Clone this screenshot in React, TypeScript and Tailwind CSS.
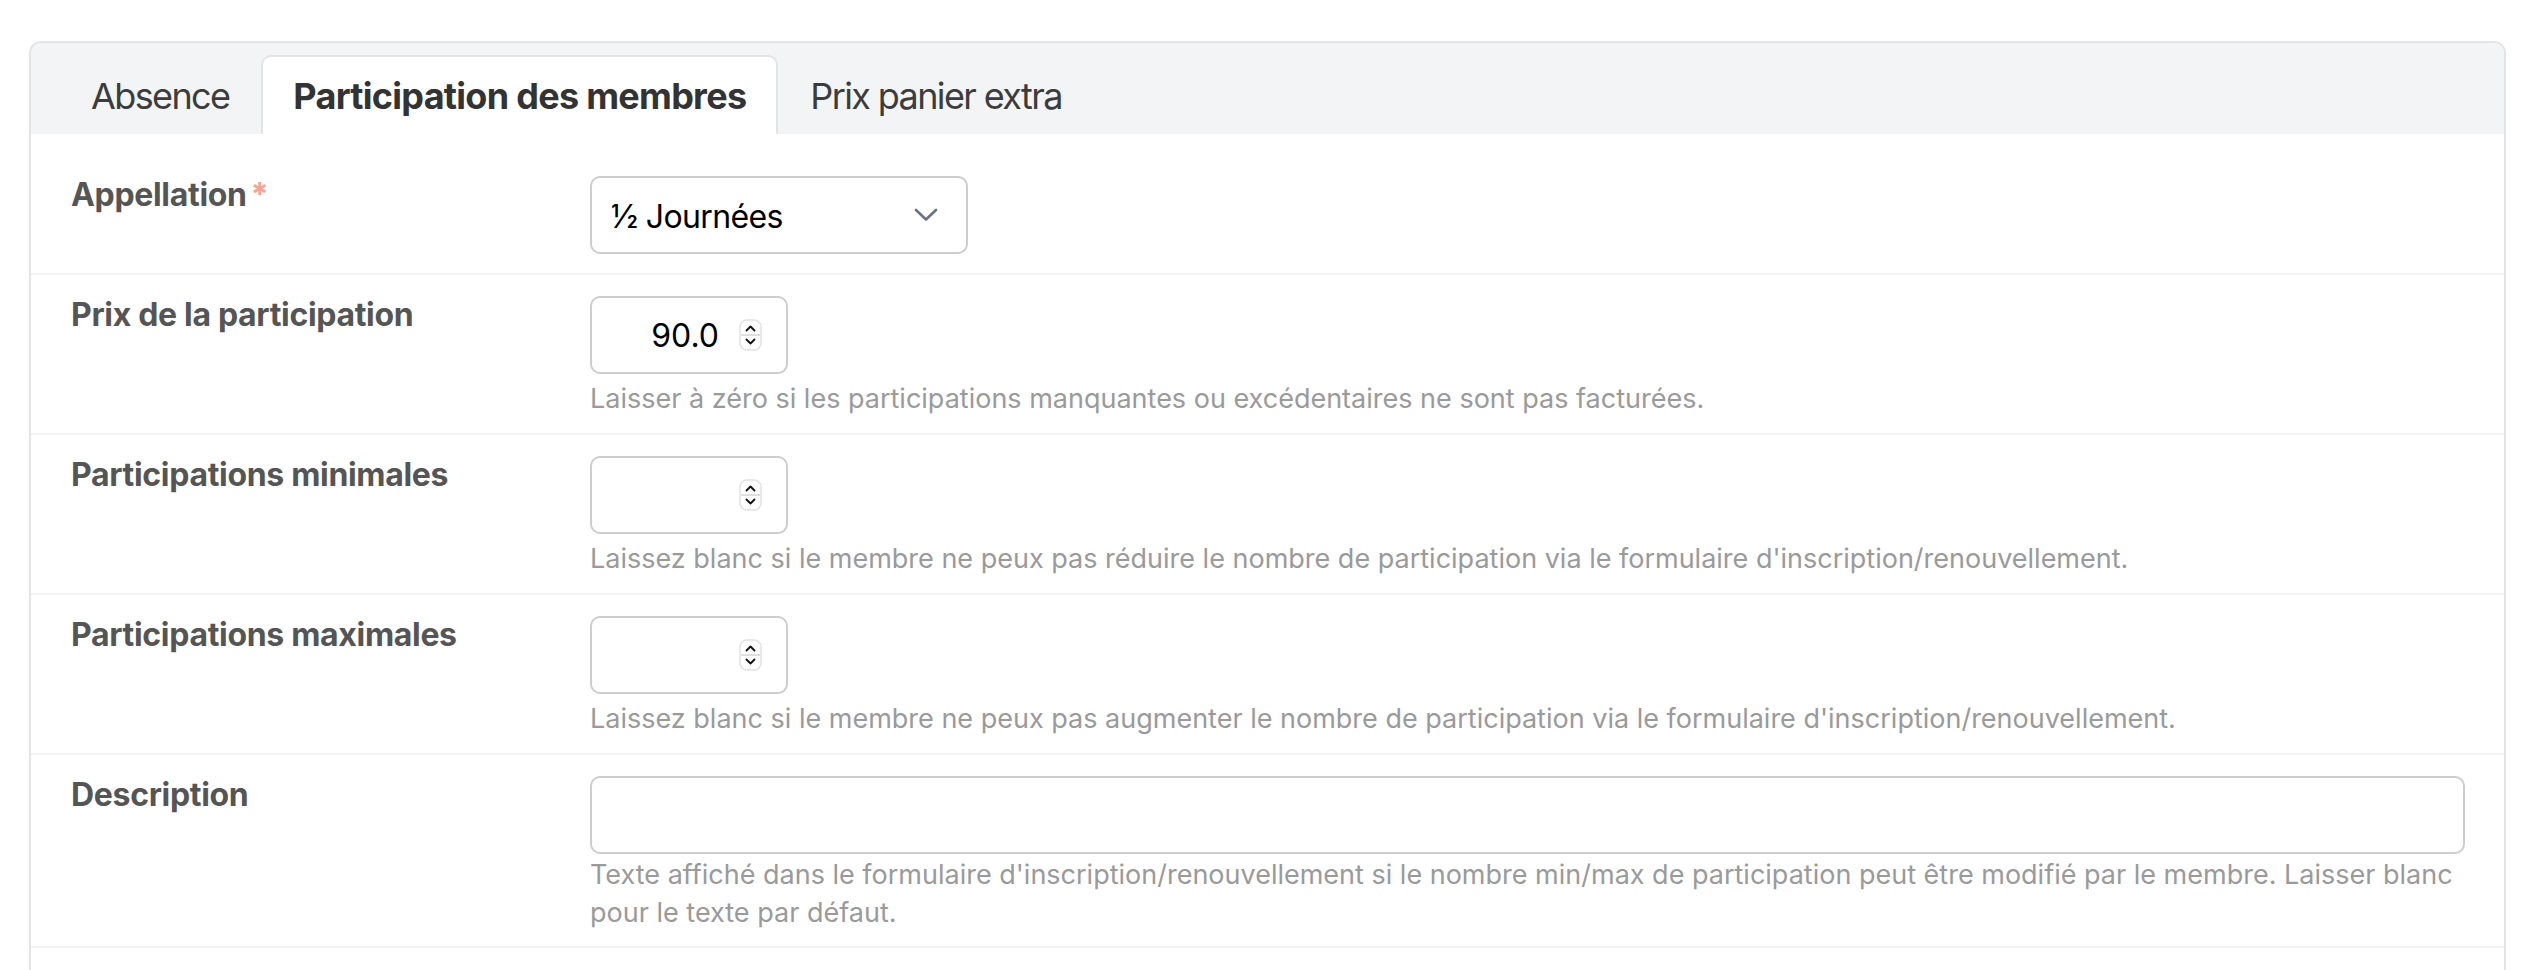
const tabs = ['Absence', 'Participation des membres', 'Prix panier extra'];

function Chevron() {
  return (
    <svg width="24" height="14" viewBox="0 0 24 14" fill="none">
      <path d="M2 2L12 11.5L22 2" stroke="#6b7280" strokeWidth="2.6" strokeLinecap="round" strokeLinejoin="round" />
    </svg>
  );
}

function Spinner() {
  return (
    <svg width="23" height="32" viewBox="0 0 23 32" fill="none">
      <rect x="1" y="1" width="21" height="30" rx="7" fill="white" stroke="#e2e2e2" strokeWidth="1.5" />
      <line x1="2" y1="16" x2="21" y2="16" stroke="#d4d4d4" strokeWidth="1.5" />
      <path d="M7.5 11.5L11.5 7.5L15.5 11.5" stroke="#111" strokeWidth="1.8" strokeLinecap="round" strokeLinejoin="round" />
      <path d="M7.5 20.5L11.5 24.5L15.5 20.5" stroke="#111" strokeWidth="1.8" strokeLinecap="round" strokeLinejoin="round" />
    </svg>
  );
}

function NumberBox({ value }: { value?: string }) {
  return (
    <div className="w-[198px] h-[78px] border-2 border-[#cdcdcd] rounded-[10px] flex items-center justify-end gap-[20px] pr-[24px] text-[32px] text-black">
      {value && <span className="pt-[2px]">{value}</span>}
      <Spinner />
    </div>
  );
}

function Help({ children, tight }: { children: React.ReactNode; tight?: boolean }) {
  return (
    <p className={tight ? 'mt-[2px] text-[27px] leading-[38px] text-[#9a9a9a] whitespace-nowrap' : 'mt-[6px] text-[27px] leading-[38px] text-[#9a9a9a]'}>
      {children}
    </p>
  );
}

function Row({ label, required, pb, children }: { label: string; required?: boolean; pb: string; children: React.ReactNode }) {
  return (
    <div className={`grid grid-cols-[519px_1fr] pl-[40px] pr-[39px] pt-[21px] border-b-2 border-[#f2f2f2] ${pb}`}>
      <div className="pt-px text-[32px] leading-[36px] font-bold text-[#555] tracking-[-0.01em]">
        {label}
        {required && <span className="ml-[4px] text-[#f6a392]">*</span>}
      </div>
      <div>{children}</div>
    </div>
  );
}

export default function App() {
  return (
    <div className="min-h-screen bg-white pt-[41px] pl-[29px] pr-[24px] font-['Inter',sans-serif] overflow-hidden">
      <div className="border-2 border-b-0 border-[#e4e4e7] rounded-t-[12px] min-h-[1000px]">
        {/* Tabs */}
        <div className="bg-[#f3f4f6] rounded-t-[10px] pt-[12px] pl-[28px] flex items-end">
          {tabs.map((t, i) => (
            <div
              key={t}
              className={
                i === 1
                  ? 'h-[79px] px-[30px] flex items-center border-2 border-b-0 border-[#e4e4e7] rounded-t-[10px] bg-white text-[36px] font-bold text-[#333] tracking-[-0.02em]'
                  : 'h-[79px] px-[30px] flex items-center border-2 border-b-0 border-transparent text-[36px] text-[#3c3c3c] tracking-[-0.045em]'
              }
            >
              {t}
            </div>
          ))}
        </div>

        {/* Form */}
        <div className="pt-[21px]">
          <Row label="Appellation" required pb="pb-[19px]">
            <div className="w-[378px] h-[78px] border-2 border-[#cdcdcd] rounded-[10px] flex items-center justify-between pl-[19px] pr-[28px] text-[32px] text-black">
              <span className="pt-[4px] tracking-[-0.02em]">½ Journées</span>
              <Chevron />
            </div>
          </Row>
          <Row label="Prix de la participation" pb="pb-[15px]">
            <NumberBox value="90.0" />
            <Help>Laisser à zéro si les participations manquantes ou excédentaires ne sont pas facturées.</Help>
          </Row>
          <Row label="Participations minimales" pb="pb-[15px]">
            <NumberBox />
            <Help>
              Laissez blanc si le membre ne peux pas réduire le nombre de participation via le formulaire d'inscription/renouvellement.
            </Help>
          </Row>
          <Row label="Participations maximales" pb="pb-[15px]">
            <NumberBox />
            <Help>
              Laissez blanc si le membre ne peux pas augmenter le nombre de participation via le formulaire d'inscription/renouvellement.
            </Help>
          </Row>
          <Row label="Description" pb="pb-[14px]">
            <div className="w-full h-[78px] border-2 border-[#cdcdcd] rounded-[10px]" />
            <Help tight>
              Texte affiché dans le formulaire d'inscription/renouvellement si le nombre min/max de participation peut être modifié par le membre. Laisser blanc
              <br />
              pour le texte par défaut.
            </Help>
          </Row>
        </div>
      </div>
    </div>
  );
}
